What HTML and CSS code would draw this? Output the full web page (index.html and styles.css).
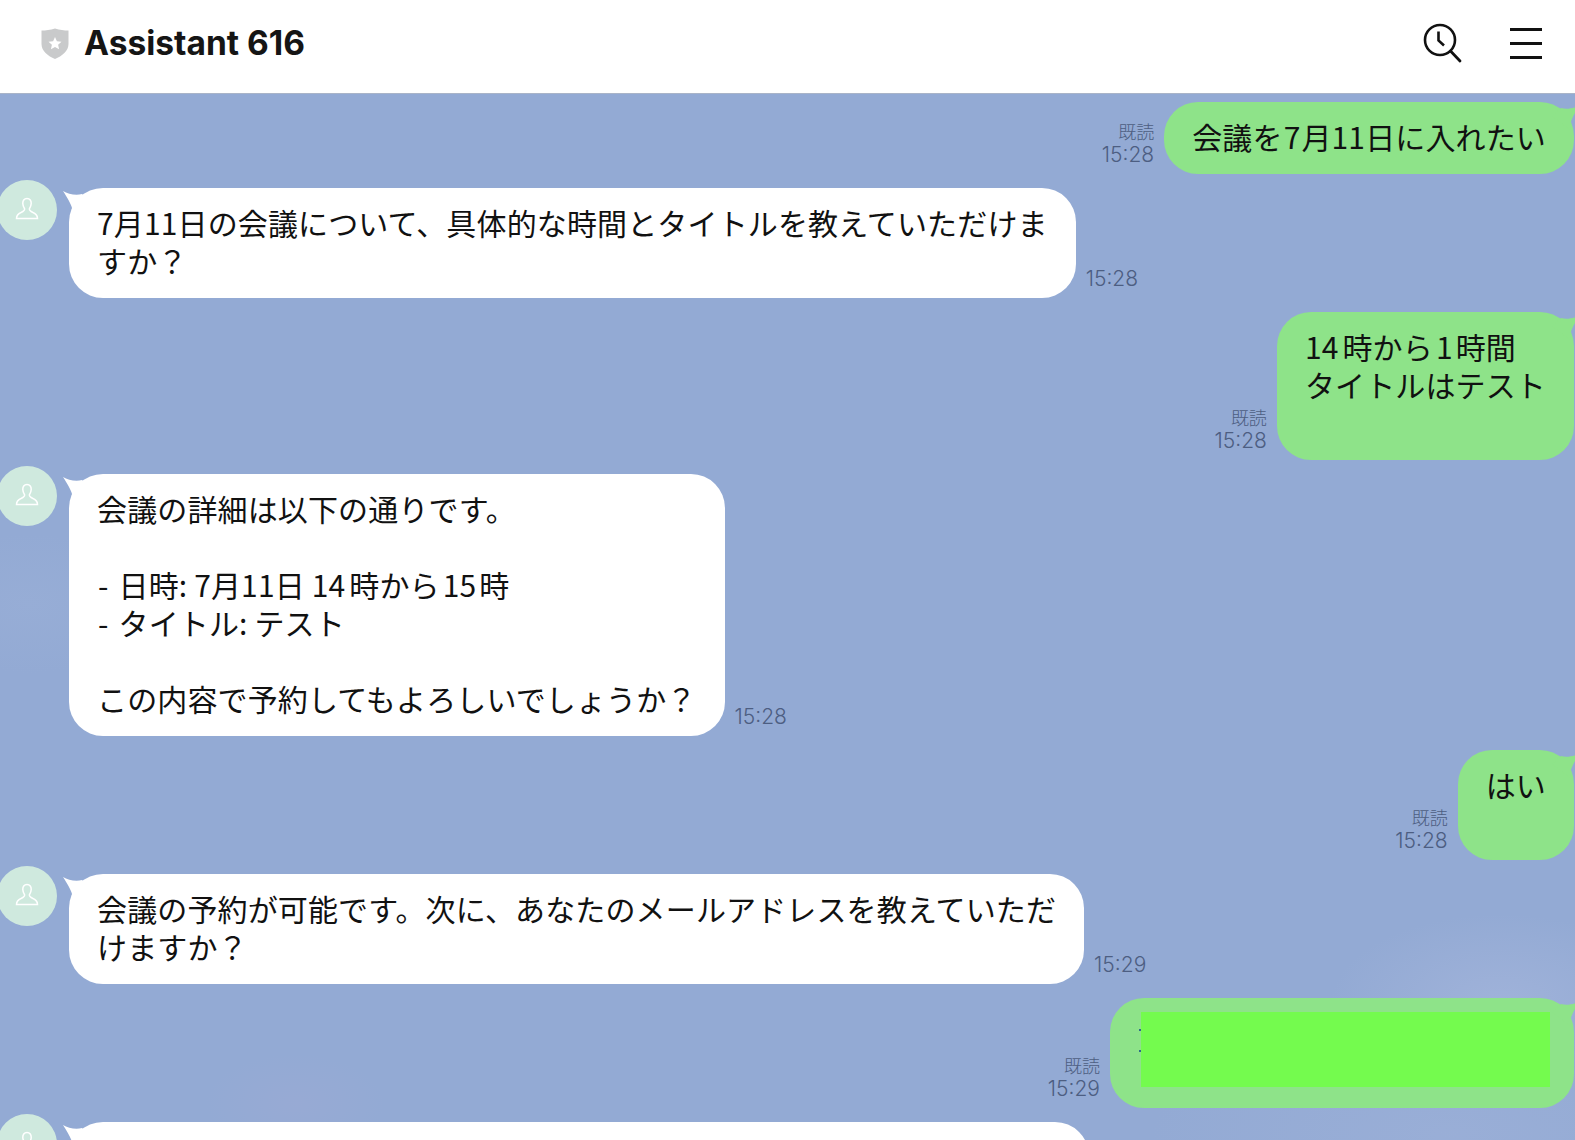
FILE: index.html
```html
<!DOCTYPE html>
<html lang="ja">
<head>
<meta charset="utf-8">
<title>Assistant 616</title>
<link rel="stylesheet" href="styles.css">
</head>
<body>
<div class="app">
  <header class="header">
    <div class="title-group">
      <svg class="shield" viewBox="0 0 28 32"><path d="M14 0.5C19 2 23 2.5 27.5 2.5V16C27.5 23 21 28 14 31C7 28 0.5 23 0.5 16V2.5C5 2.5 9 2 14 0.5Z" fill="#c9cacb"/><path d="M14 9l1.9 4.2 4.6.5-3.4 3.1 1 4.5-4.1-2.3-4.1 2.3 1-4.5-3.4-3.1 4.6-.5z" fill="#fff"/></svg>
      <h1 class="title">Assistant 616</h1>
    </div>
    <div class="actions">
      <svg class="icon-clock" viewBox="0 0 40 40"><circle cx="18" cy="17" r="15" fill="none" stroke="#111" stroke-width="2.6"/><path d="M16.5 8.5V17.5L22 22.5" fill="none" stroke="#111" stroke-width="2.6"/><path d="M28.5 28L38 38" fill="none" stroke="#111" stroke-width="2.8" stroke-linecap="round"/></svg>
      <svg class="icon-menu" viewBox="0 0 34 32"><path d="M1 2.5H33M1 16.5H33M1 30.5H33" fill="none" stroke="#111" stroke-width="2.8"/></svg>
    </div>
  </header>
  <main class="chat">
    <div class="row row-me">
      <div class="meta"><span class="read">既読</span><span>15:28</span></div>
      <div class="bubble bubble-me">会議を<span class="num-tight">7</span>月11日に入れたい<svg class="tail tail-me" viewBox="0 0 30 28"><path d="M0 1C5 4 13 6 19 4L28 12L10 26L9 18C8 14 4 7 0 1Z"/></svg></div>
    </div>
    <div class="row row-bot">
      <div class="avatar"><svg viewBox="0 0 24 24"><path d="M12 1.5C15 1.5 16.3 4 16.2 6.5C16.1 9 15 10.7 14.4 11.8C14.2 13.2 15 14 18 15.5C21 16.8 22.5 18 22.5 21.5H1.5C1.5 18 3 16.8 6 15.5C9 14 9.8 13.2 9.6 11.8C9 10.7 7.9 9 7.8 6.5C7.7 4 9 1.5 12 1.5Z" fill="none" stroke="#fff" stroke-width="1.5"/></svg></div>
      <div class="bubble bubble-bot">7月11日の会議について、具体的な時間とタイトルを教えていただけま<br>すか？<svg class="tail tail-bot" viewBox="0 0 30 28"><path d="M0 1C5 4 13 6 19 4L28 12L10 26L9 18C8 14 4 7 0 1Z"/></svg></div>
      <div class="meta"><span>15:28</span></div>
    </div>
    <div class="row row-me">
      <div class="meta"><span class="read">既読</span><span>15:28</span></div>
      <div class="bubble bubble-me"><span class="num-start">14</span>時から<span class="num">1</span>時間<br>タイトルはテスト<br>&nbsp;<svg class="tail tail-me" viewBox="0 0 30 28"><path d="M0 1C5 4 13 6 19 4L28 12L10 26L9 18C8 14 4 7 0 1Z"/></svg></div>
    </div>
    <div class="row row-bot">
      <div class="avatar"><svg viewBox="0 0 24 24"><path d="M12 1.5C15 1.5 16.3 4 16.2 6.5C16.1 9 15 10.7 14.4 11.8C14.2 13.2 15 14 18 15.5C21 16.8 22.5 18 22.5 21.5H1.5C1.5 18 3 16.8 6 15.5C9 14 9.8 13.2 9.6 11.8C9 10.7 7.9 9 7.8 6.5C7.7 4 9 1.5 12 1.5Z" fill="none" stroke="#fff" stroke-width="1.5"/></svg></div>
      <div class="bubble bubble-bot">会議の詳細は以下の通りです。<br>&nbsp;<br><span class="dash">-</span>日時: 7月11日 <span class="num-start">14</span>時から<span class="num">15</span>時<br><span class="dash">-</span>タイトル: テスト<br>&nbsp;<br>この内容で予約してもよろしいでしょうか？<svg class="tail tail-bot" viewBox="0 0 30 28"><path d="M0 1C5 4 13 6 19 4L28 12L10 26L9 18C8 14 4 7 0 1Z"/></svg></div>
      <div class="meta"><span>15:28</span></div>
    </div>
    <div class="row row-me">
      <div class="meta"><span class="read">既読</span><span>15:28</span></div>
      <div class="bubble bubble-me">はい<br>&nbsp;<svg class="tail tail-me" viewBox="0 0 30 28"><path d="M0 1C5 4 13 6 19 4L28 12L10 26L9 18C8 14 4 7 0 1Z"/></svg></div>
    </div>
    <div class="row row-bot">
      <div class="avatar"><svg viewBox="0 0 24 24"><path d="M12 1.5C15 1.5 16.3 4 16.2 6.5C16.1 9 15 10.7 14.4 11.8C14.2 13.2 15 14 18 15.5C21 16.8 22.5 18 22.5 21.5H1.5C1.5 18 3 16.8 6 15.5C9 14 9.8 13.2 9.6 11.8C9 10.7 7.9 9 7.8 6.5C7.7 4 9 1.5 12 1.5Z" fill="none" stroke="#fff" stroke-width="1.5"/></svg></div>
      <div class="bubble bubble-bot">会議の予約が可能です。次に、あなたのメールアドレスを教えていただ<br>けますか？<svg class="tail tail-bot" viewBox="0 0 30 28"><path d="M0 1C5 4 13 6 19 4L28 12L10 26L9 18C8 14 4 7 0 1Z"/></svg></div>
      <div class="meta"><span>15:29</span></div>
    </div>
    <div class="row row-me">
      <div class="meta"><span class="read">既読</span><span>15:29</span></div>
      <div class="bubble bubble-me bubble-redacted"><span class="dot dot-one"></span><span class="dot dot-two"></span><div class="redaction"></div><svg class="tail tail-me" viewBox="0 0 30 28"><path d="M0 1C5 4 13 6 19 4L28 12L10 26L9 18C8 14 4 7 0 1Z"/></svg></div>
    </div>
    <div class="row row-bot">
      <div class="avatar"><svg viewBox="0 0 24 24"><path d="M12 1.5C15 1.5 16.3 4 16.2 6.5C16.1 9 15 10.7 14.4 11.8C14.2 13.2 15 14 18 15.5C21 16.8 22.5 18 22.5 21.5H1.5C1.5 18 3 16.8 6 15.5C9 14 9.8 13.2 9.6 11.8C9 10.7 7.9 9 7.8 6.5C7.7 4 9 1.5 12 1.5Z" fill="none" stroke="#fff" stroke-width="1.5"/></svg></div>
      <div class="bubble bubble-bot bubble-cut">&nbsp;<svg class="tail tail-bot" viewBox="0 0 30 28"><path d="M0 1C5 4 13 6 19 4L28 12L10 26L9 18C8 14 4 7 0 1Z"/></svg></div>
    </div>
  </main>
</div>
</body>
</html>
```
FILE: styles.css
```css
* { box-sizing: border-box; }
html, body { margin: 0; height: 100%; overflow: hidden; }
body { font-family: "Noto Sans CJK JP", "Noto Sans", sans-serif; color: #111; background: #93aad4; }
.app { height: 1140px; display: flex; flex-direction: column; overflow: hidden; }
.header { height: 94px; flex: none; background: #fff; border-bottom: 1px solid #a9b4c8; display: flex; align-items: center; justify-content: space-between; padding: 0 32px 7px 41px; }
.title-group { display: flex; align-items: center; gap: 15px; }
.shield { width: 28px; height: 32px; margin-top: 1px; }
.title { margin: 0; font-family: Inter, "Liberation Sans", sans-serif; font-size: 33.5px; font-weight: 700; color: #151515; line-height: 40px; }
.actions { display: flex; align-items: center; gap: 47px; }
.icon-clock { width: 40px; height: 40px; }
.icon-menu { width: 34px; height: 32px; }
.chat {
  flex: 1; min-height: 0; overflow: hidden; padding: 8px 1px 0 0; display: flex; flex-direction: column; gap: 14px;
  background:
    radial-gradient(ellipse 170px 90px at 1500px 910px, rgba(170,185,222,.55), transparent),
    radial-gradient(ellipse 300px 120px at 1450px 1040px, rgba(165,182,220,.35), transparent),
    radial-gradient(ellipse 90px 50px at 295px 1010px, rgba(160,170,212,.35), transparent),
    radial-gradient(ellipse 130px 70px at 30px 510px, rgba(160,180,218,.3), transparent),
    #93aad4;
}
.row { display: flex; flex: none; align-items: flex-end; gap: 10px; }
.row-me { justify-content: flex-end; }
.row-bot { gap: 0; }
.avatar { flex: none; width: 60px; height: 60px; border-radius: 50%; background: #cfe9de; margin: -8px 12px 0 -3px; align-self: flex-start; display: flex; align-items: center; justify-content: center; }
.avatar svg { width: 24px; height: 24px; margin-top: -2px; }
.bubble { position: relative; flex: none; padding: 15px 28px 19px; border-radius: 34px; font-size: 30px; line-height: 38px; letter-spacing: 0.14px; white-space: nowrap; }
.bubble-me { background: #8ee389; fill: #8ee389; }
.bubble-bot { background: #fff; fill: #fff; }
.num { margin: 0 3px; }
.num-tight { margin: 0 1px; }
.num-start { margin-right: 4px; }
.dash { display: inline-block; margin: 0 10px 0 1px; }
.tail { position: absolute; top: 2px; width: 30px; height: 28px; }
.tail-bot { left: -6px; }
.tail-me { right: -6px; transform: scaleX(-1); }
.meta { display: flex; flex-direction: column; align-items: flex-end; font-family: Inter, "Noto Sans", sans-serif; font-size: 21px; font-weight: 300; line-height: 24px; color: #4d5e82; margin-bottom: 7px; }
.row-bot .meta { margin-left: 10px; }
.read { font-family: "Noto Sans CJK JP", sans-serif; font-size: 18px; }
.bubble-redacted { width: 464px; height: 110px; }
.redaction { position: absolute; top: 14px; left: 31px; width: 409px; height: 75px; background: #74fb4e; }
.dot { position: absolute; left: 29px; width: 2px; height: 2px; background: #2d6a8a; }
.dot-one { top: 31px; }
.dot-two { top: 52px; }
.bubble-cut { width: 1020px; height: 110px; }
```
